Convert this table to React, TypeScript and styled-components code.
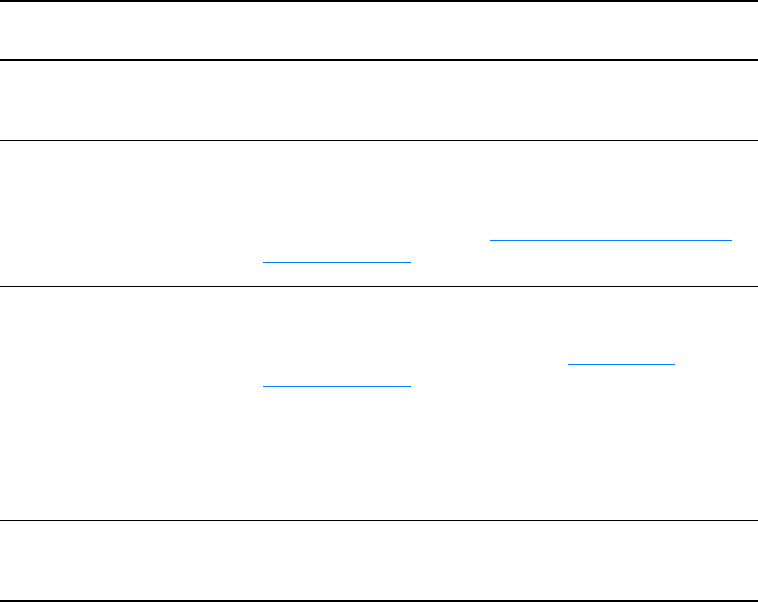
import styled, { createGlobalStyle } from 'styled-components';

const GlobalStyle = createGlobalStyle`
  html, body {
    margin: 0;
    padding: 0;
    background: #ffffff;
    font-family: "Liberation Sans", Arial, sans-serif;
  }
`;

type LinkSpan = { indent: number; width: number };
type RowData = {
  height: number;
  rule: number;
  linksTop?: number;
  links?: LinkSpan[];
};

const rows: RowData[] = [
  { height: 79, rule: 1 },
  {
    height: 145,
    rule: 1,
    linksTop: 99,
    links: [
      { indent: 227, width: 242 },
      { indent: 0, width: 148 },
    ],
  },
  {
    height: 233,
    rule: 1,
    linksTop: 77,
    links: [
      { indent: 305, width: 107 },
      { indent: 0, width: 148 },
    ],
  },
  { height: 79, rule: 2 },
];

function App() {
  return (
    <>
      <GlobalStyle />
      <Table>
        <HeaderRow />
        {rows.map((row, i) => (
          <Row key={i} $height={row.height} $rule={row.rule}>
            <LabelCell />
            <BodyCell $top={row.linksTop ?? 0}>
              {row.links
                ? row.links.map((link, j) => (
                    <Link
                      key={j}
                      href='#'
                      aria-label='link'
                      $indent={link.indent}
                      $width={link.width}
                    />
                  ))
                : null}
            </BodyCell>
          </Row>
        ))}
      </Table>
    </>
  );
}

const Table = styled.div`
  width: 758px;
  display: flex;
  flex-direction: column;
  border-top: 2px solid #000000;
`;

const HeaderRow = styled.div`
  height: 57px;
  border-bottom: 2px solid #000000;
`;

const Row = styled.div<{ $height: number; $rule: number }>`
  height: ${(p) => p.$height}px;
  display: grid;
  grid-template-columns: 263px 1fr;
  border-bottom: ${(p) => p.$rule}px solid #000000;
`;

const LabelCell = styled.div``;

const BodyCell = styled.div<{ $top: number }>`
  display: flex;
  flex-direction: column;
  gap: 21px;
  padding-top: ${(p) => p.$top}px;
`;

const Link = styled.a<{ $indent: number; $width: number }>`
  display: block;
  height: 1px;
  margin-left: ${(p) => p.$indent}px;
  width: ${(p) => p.$width}px;
  background: #0a7cff;
`;

export default App;
